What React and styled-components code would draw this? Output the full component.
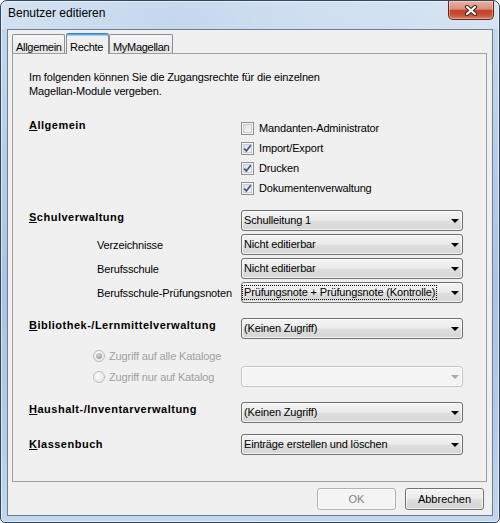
import styled, { createGlobalStyle } from "styled-components";

const GlobalStyle = createGlobalStyle`
  html, body {
    margin: 0;
    padding: 0;
    background: #fff;
  }
  body {
    font-family: "Liberation Sans", Arial, sans-serif;
    font-size: 11px;
    letter-spacing: -0.15px;
    color: #000;
  }
  * {
    box-sizing: border-box;
  }
`;

const Window = styled.div`
  width: 500px;
  height: 523px;
  display: flex;
  flex-direction: column;
  padding: 0 6px 6px;
  border: 1px solid #34465c;
  border-radius: 7px 7px 5px 5px;
  background: linear-gradient(
    180deg,
    #c6d9ee 0%,
    #bcd2ea 20%,
    #a9c4e3 55%,
    #b3cbe7 80%,
    #c2d7ed 100%
  );
  box-shadow: inset 0 0 0 1px rgba(255, 255, 255, 0.55);
  overflow: hidden;
`;

const TitleBar = styled.div`
  flex: none;
  height: 28px;
  display: flex;
  align-items: flex-start;
  justify-content: space-between;
  margin: 0 -6px;
  padding: 0 5px 0 7px;
  background: linear-gradient(
    100deg,
    rgba(255, 255, 255, 0.25) 0%,
    rgba(255, 255, 255, 0) 35%,
    rgba(255, 255, 255, 0.15) 55%,
    rgba(255, 255, 255, 0.3) 100%
  );
`;

const Title = styled.div`
  margin-top: 5px;
  font-size: 12px;
  line-height: 15px;
  letter-spacing: 0;
  color: #000;
`;

const CloseButton = styled.div`
  width: 46px;
  height: 19px;
  display: flex;
  align-items: center;
  justify-content: center;
  border: 1px solid #5b2720;
  border-top: none;
  border-radius: 0 0 5px 5px;
  background: linear-gradient(
    180deg,
    #eab3a5 0%,
    #dc8d79 45%,
    #c4442b 52%,
    #c94b31 75%,
    #de7c60 100%
  );
  box-shadow: inset 0 0 0 1px rgba(255, 255, 255, 0.35);
`;

const Client = styled.div`
  flex: 1;
  display: flex;
  flex-direction: column;
  background: #f0f0f0;
  border: 1px solid #6e7e92;
`;

const TabStrip = styled.div`
  flex: none;
  height: 23px;
  display: flex;
  align-items: flex-end;
  padding-left: 4px;
`;

const Tab = styled.div`
  position: relative;
  z-index: ${(p) => (p.$active ? 1 : 0)};
  width: ${(p) => p.$w}px;
  height: ${(p) => (p.$active ? 21 : 19)}px;
  margin-left: ${(p) => p.$ml || 0}px;
  margin-bottom: ${(p) => (p.$active ? -1 : 0)}px;
  padding: ${(p) => (p.$active ? 6 : 5)}px 0 0 3px;
  line-height: 14px;
  letter-spacing: -0.3px;
  white-space: nowrap;
  border: 1px solid #898c95;
  border-bottom: none;
  border-radius: 2px 2px 0 0;
  background: ${(p) =>
    p.$active ? "#f0f0f0" : "linear-gradient(180deg, #f6f6f6, #e6e6e6)"};
  border-top-color: ${(p) => (p.$active ? "#3c7fb1" : "#898c95")};
  box-shadow: ${(p) =>
    p.$active ? "inset 0 1px 0 #5ea9ee, inset 0 2px 0 #9ccdf5" : "none"};
`;

const Panel = styled.div`
  flex: 1;
  margin: 0 5px 0 4px;
  padding: 16px 21px 0 16px;
  border: 1px solid #a0a0a0;
  background: #f0f0f0;
`;

const Intro = styled.p`
  margin: 0;
  line-height: 14px;
`;

const Row = styled.div`
  display: grid;
  grid-template-columns: 212px 222px;
  align-items: center;
  min-height: ${(p) => p.$h || 21}px;
  margin-top: ${(p) => p.$mt || 0}px;
`;

const SectionLabel = styled.div`
  align-self: start;
  padding-top: ${(p) => p.$pt || 0}px;
  font-weight: bold;
  line-height: 14px;
  letter-spacing: 0.5px;
  white-space: nowrap;
`;

const SubLabel = styled.div`
  padding-left: 68px;
  line-height: 14px;
  white-space: nowrap;
`;

const CheckList = styled.div`
  display: flex;
  flex-direction: column;
`;

const CheckRow = styled.label`
  height: 20px;
  display: flex;
  align-items: center;
  gap: 5px;
`;

const Box = styled.span`
  width: 13px;
  height: 13px;
  flex: none;
  display: flex;
  align-items: center;
  justify-content: center;
  border: 1px solid #8e8f8f;
  background: linear-gradient(135deg, #d3d5d8 0%, #eeeff0 60%, #fbfbfb 100%);
  box-shadow: inset 0 0 0 1px #f6f6f6, inset 0 0 0 2px #c9ccd0;
`;

const RadioRow = styled.div`
  display: flex;
  align-items: center;
  gap: 4px;
  padding-left: 64px;
  color: #a0a0a0;
  white-space: nowrap;
`;

const RadioDot = styled.span`
  width: 12px;
  height: 12px;
  flex: none;
  display: flex;
  align-items: center;
  justify-content: center;
  border-radius: 50%;
  border: 1px solid #bcbcbc;
  background: radial-gradient(circle at 40% 35%, #fbfbfb, #e2e2e2);
  &::after {
    content: "";
    display: ${(p) => (p.$checked ? "block" : "none")};
    width: 6px;
    height: 6px;
    border-radius: 50%;
    background: radial-gradient(circle at 40% 35%, #d4d4d4, #8e8e8e);
  }
`;

const Combo = styled.div`
  height: 21px;
  display: flex;
  align-items: center;
  justify-content: space-between;
  padding: 0 3px 0 1px;
  white-space: nowrap;
  border: 1px solid ${(p) => (p.$disabled ? "#c4c7ca" : "#707070")};
  border-radius: 3px;
  background: ${(p) =>
    p.$disabled
      ? "#f4f4f4"
      : "linear-gradient(180deg, #f4f4f4 0%, #ececec 45%, #dedede 55%, #d5d5d5 100%)"};
  box-shadow: inset 0 0 0 1px rgba(255, 255, 255, 0.7);
`;

const ComboText = styled.span`
  padding: 0 1px;
  line-height: 13px;
  outline: ${(p) => (p.$focus ? "1px dotted #000" : "none")};
`;

const Arrow = styled.span`
  width: 0;
  height: 0;
  border-left: 4px solid transparent;
  border-right: 4px solid transparent;
  border-top: 4px solid ${(p) => (p.$disabled ? "#a8a8a8" : "#000")};
`;

const Footer = styled.div`
  flex: none;
  display: flex;
  justify-content: flex-end;
  gap: 9px;
  padding: 6px 8px 5px 0;
`;

const Button = styled.button`
  width: 79px;
  height: 22px;
  padding: 0;
  font: inherit;
  font-size: 11px;
  color: #000;
  border: 1px solid #707070;
  border-radius: 3px;
  background: linear-gradient(
    180deg,
    #f4f4f4 0%,
    #ececec 45%,
    #dedede 55%,
    #d3d3d3 100%
  );
  box-shadow: inset 0 0 0 1px rgba(255, 255, 255, 0.7);
  &:disabled {
    color: #838383;
    border-color: #adb2b5;
    background: #f4f4f4;
  }
`;

function Check({ checked, children }) {
  return (
    <CheckRow>
      <Box>
        {checked && (
          <svg width="9" height="9" viewBox="0 0 9 9">
            <path
              d="M1.2 4.6 L3.4 7 L7.8 1.3"
              fill="none"
              stroke="#3e528e"
              strokeWidth="1.7"
            />
          </svg>
        )}
      </Box>
      {children}
    </CheckRow>
  );
}

function Select({ value, focus, disabled }) {
  return (
    <Combo $disabled={disabled}>
      <ComboText $focus={focus}>{value}</ComboText>
      <Arrow $disabled={disabled} />
    </Combo>
  );
}

export default function App() {
  return (
    <>
      <GlobalStyle />
      <Window>
        <TitleBar>
          <Title>Benutzer editieren</Title>
          <CloseButton>
            <svg width="14" height="11" viewBox="0 0 14 11">
              <path
                d="M3 2 L11 9 M11 2 L3 9"
                stroke="#3a2420"
                strokeWidth="4.2"
                strokeLinecap="round"
              />
              <path
                d="M3 2 L11 9 M11 2 L3 9"
                stroke="#fff"
                strokeWidth="2.2"
                strokeLinecap="round"
              />
            </svg>
          </CloseButton>
        </TitleBar>
        <Client>
          <TabStrip>
            <Tab $w={53}>Allgemein</Tab>
            <Tab $w={43} $ml={1} $active>
              Rechte
            </Tab>
            <Tab $w={64}>MyMagellan</Tab>
          </TabStrip>
          <Panel>
            <Intro>
              Im folgenden können Sie die Zugangsrechte für die einzelnen
              <br />
              Magellan-Module vergeben.
            </Intro>

            <Row $mt={20}>
              <SectionLabel>
                <u>A</u>llgemein
              </SectionLabel>
              <CheckList>
                <Check>Mandanten-Administrator</Check>
                <Check checked>Import/Export</Check>
                <Check checked>Drucken</Check>
                <Check checked>Dokumentenverwaltung</Check>
              </CheckList>
            </Row>

            <Row $mt={12}>
              <SectionLabel>
                <u>S</u>chulverwaltung
              </SectionLabel>
              <Select value="Schulleitung 1" />
            </Row>
            <Row $mt={3}>
              <SubLabel>Verzeichnisse</SubLabel>
              <Select value="Nicht editierbar" />
            </Row>
            <Row $mt={3}>
              <SubLabel>Berufsschule</SubLabel>
              <Select value="Nicht editierbar" />
            </Row>
            <Row $mt={3}>
              <SubLabel>Berufsschule-Prüfungsnoten</SubLabel>
              <Select value="Prüfungsnote + Prüfungsnote (Kontrolle)" focus />
            </Row>

            <Row $mt={15}>
              <SectionLabel>
                <u>B</u>ibliothek-/Lernmittelverwaltung
              </SectionLabel>
              <Select value="(Keinen Zugriff)" />
            </Row>
            <Row $mt={7} $h={20}>
              <RadioRow>
                <RadioDot $checked />
                Zugriff auf alle Kataloge
              </RadioRow>
            </Row>
            <Row>
              <RadioRow>
                <RadioDot />
                Zugriff nur auf Katalog
              </RadioRow>
              <Select value="" disabled />
            </Row>

            <Row $mt={15}>
              <SectionLabel>
                <u>H</u>aushalt-/Inventarverwaltung
              </SectionLabel>
              <Select value="(Keinen Zugriff)" />
            </Row>
            <Row $mt={11}>
              <SectionLabel $pt={3}>
                <u>K</u>lassenbuch
              </SectionLabel>
              <Select value="Einträge erstellen und löschen" />
            </Row>
          </Panel>
          <Footer>
            <Button disabled>OK</Button>
            <Button>Abbrechen</Button>
          </Footer>
        </Client>
      </Window>
    </>
  );
}
